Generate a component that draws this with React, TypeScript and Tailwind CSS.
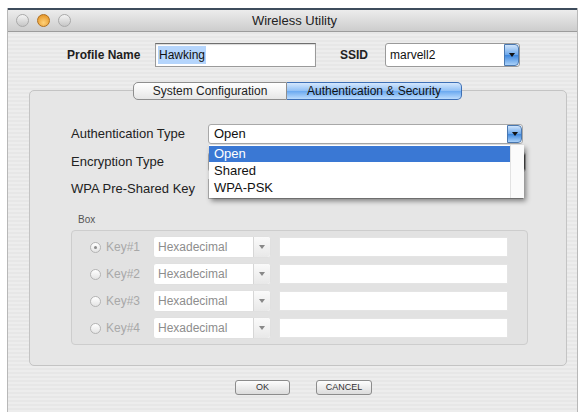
import { ChevronDown } from 'lucide-react';

const font = { fontFamily: '"Liberation Sans", Arial, sans-serif' };

const BlueArrow = ({ className = '' }: { className?: string }) => (
  <div
    className={`flex items-center justify-center w-[15px] h-full rounded-r-[4px] border border-[#4a78b0] bg-[linear-gradient(#cfe4fb,#6aa6ea_50%,#3d87de_51%,#a9d0f8)] ${className}`}
  >
    <div className="w-0 h-0 border-l-[3px] border-r-[3px] border-t-[4px] border-l-transparent border-r-transparent border-t-[#111]" />
  </div>
);

const GrayArrow = () => (
  <div className="flex items-center justify-center w-[17px] h-full rounded-r-[3px] border-l border-[#d6d6d6] bg-[linear-gradient(#fafafa,#e8e8e8)]">
    <div className="w-0 h-0 border-l-[3px] border-r-[3px] border-t-[4px] border-l-transparent border-r-transparent border-t-[#888]" />
  </div>
);

const KeyRow = ({ label, checked }: { label: string; checked?: boolean }) => (
  <div className="flex items-center h-[22px]">
    <div className="w-[11px] h-[11px] ml-[18px] rounded-full border border-[#b4b4b4] bg-[linear-gradient(#ffffff,#e4e4e4)] flex items-center justify-center">
      {checked && <div className="w-[3px] h-[3px] rounded-full bg-[#8a8a8a]" />}
    </div>
    <span className="ml-[5px] w-[47px] text-[12px] text-[#a8a8a8]">{label}</span>
    <div className="flex w-[118px] h-[22px] border border-[#e0e0e0] bg-white rounded-[3px]">
      <span className="flex-1 pl-[4px] text-[12px] leading-[20px] text-[#8d8d8d]">Hexadecimal</span>
      <GrayArrow />
    </div>
    <div className="ml-[8px] w-[229px] h-[20px] bg-white border border-[#e4e4e4]" />
  </div>
);

export default function App() {
  return (
    <div className="w-[582px] h-[412px] overflow-hidden bg-white pl-[7px] pt-[8px]" style={font}>
      <div className="w-[571px] h-[420px] border-x border-[#b8b8b8] flex flex-col bg-[repeating-linear-gradient(0deg,#ededed_0px,#ededed_2px,#e7e7e7_2px,#e7e7e7_4px)]">
        {/* title bar */}
        <div className="relative h-[24px] border-t-2 border-[#3e4c5c] border-b border-b-[#9c9c9c] bg-[linear-gradient(#ececec,#cdcdcd)] flex items-center justify-center">
          <div className="absolute left-[8px] top-[4px] flex gap-[8px]">
            <div className="w-[13px] h-[13px] rounded-full border border-[#a9a9a9] bg-[linear-gradient(#f4f4f4,#c6c6c6)]" />
            <div className="w-[13px] h-[13px] rounded-full border border-[#b07020] bg-[radial-gradient(circle_at_50%_70%,#ffd27a,#e08a18)]" />
            <div className="w-[13px] h-[13px] rounded-full border border-[#a9a9a9] bg-[linear-gradient(#f4f4f4,#c6c6c6)]" />
          </div>
          <span className="text-[13px] text-[#222] ml-[4px]">Wireless Utility</span>
        </div>

        {/* profile row */}
        <div className="flex items-center mt-[11px] h-[24px] pl-[59px]">
          <span className="w-[88px] text-[12px] font-bold text-[#1e1e1e]">Profile Name</span>
          <div className="w-[161px] h-[24px] bg-white border border-[#9a9a9a] border-t-[#6f6f6f] flex items-center pl-[2px] shadow-[inset_0_1px_1px_rgba(0,0,0,0.15)]">
            <span className="bg-[#b5d5fc] px-[1px] text-[12px] text-[#111]">Hawking</span>
          </div>
          <span className="ml-[24px] w-[45px] text-[12px] font-bold text-[#222]">SSID</span>
          <div className="flex w-[135px] h-[24px] bg-white border border-[#9a9a9a] rounded-[3px]">
            <span className="flex-1 pl-[4px] text-[12px] leading-[22px] text-[#111]">marvell2</span>
            <BlueArrow />
          </div>
        </div>

        {/* tabs */}
        <div className="flex mt-[15px] ml-[125px] h-[18px] relative z-10">
          <div className="w-[154px] h-[18px] rounded-l-[5px] border border-[#8e8e8e] bg-[linear-gradient(#ffffff,#e6e6e6)] flex items-center justify-center text-[12px] text-[#222]">
            System Configuration
          </div>
          <div className="w-[175px] h-[18px] rounded-r-[5px] border border-l-0 border-[#3d6fb5] bg-[linear-gradient(#d4e7fd,#8fbff5_50%,#6aa9f0_51%,#bcdcfd)] flex items-center justify-center text-[12px] text-[#111]">
            Authentication &amp; Security
          </div>
        </div>

        {/* tab panel */}
        <div className="ml-[21px] -mt-[10px] w-[538px] h-[276px] rounded-[5px] border border-[#c4c4c4] bg-[#e6e6e6] flex flex-col pl-[41px]">
          <div className="flex items-center mt-[33px] h-[20px]">
            <span className="w-[137px] text-[13px] text-[#222]">Authentication Type</span>
            <div className="relative flex w-[315px] h-[20px] bg-white border border-[#a8a8a8] rounded-[3px]">
              <span className="flex-1 pl-[5px] text-[13px] leading-[18px] text-[#111]">Open</span>
              <BlueArrow />
              {/* open list */}
              <div className="absolute left-0 top-[20px] w-[315px] h-[53px] bg-white shadow-[2px_3px_5px_rgba(0,0,0,0.45)] z-20 flex">
                <div className="flex-1 flex flex-col pt-[1px]">
                  <div className="h-[16px] bg-[#3a78d4] pl-[5px] text-[13px] leading-[16px] text-white">Open</div>
                  <div className="h-[17px] pl-[5px] text-[13px] leading-[17px] text-[#111]">Shared</div>
                  <div className="h-[17px] pl-[5px] text-[13px] leading-[17px] text-[#111]">WPA-PSK</div>
                </div>
                <div className="w-[14px] border-l border-[#e2e2e2] bg-[#fbfbfb]" />
              </div>
            </div>
          </div>
          <div className="flex items-center mt-[8px] h-[20px]">
            <span className="w-[137px] text-[13px] text-[#222]">Encryption Type</span>
            <div className="flex w-[318px] h-[20px] bg-white border border-[#a8a8a8] rounded-[3px]">
              <span className="flex-1" />
              <div className="w-[6px] h-full bg-[#555] rounded-r-[3px]" />
            </div>
          </div>
          <div className="flex items-center mt-[7px] h-[20px]">
            <span className="w-[137px] text-[13px] text-[#222]">WPA Pre-Shared Key</span>
            <div className="w-[315px] h-[20px] bg-white border border-[#b0b0b0]" />
          </div>

          <span className="mt-[15px] ml-[7px] text-[10px] text-[#555] leading-[12px]">Box</span>
          <div className="mt-[4px] w-[457px] h-[115px] rounded-[4px] border border-[#cdcdcd] bg-[#e2e2e2] flex flex-col pt-[5px] gap-[5px]">
            <KeyRow label="Key#1" checked />
            <KeyRow label="Key#2" />
            <KeyRow label="Key#3" />
            <KeyRow label="Key#4" />
          </div>
        </div>

        {/* buttons */}
        <div className="flex mt-[14px] ml-[227px] gap-[26px]">
          <button className="w-[55px] h-[15px] rounded-[3px] border border-[#8c8c8c] bg-[linear-gradient(#fdfdfd,#dcdcdc)] text-[9px] leading-[13px] text-[#333]">
            OK
          </button>
          <button className="w-[56px] h-[15px] rounded-[3px] border border-[#8c8c8c] bg-[linear-gradient(#fdfdfd,#dcdcdc)] text-[9px] leading-[13px] text-[#333]">
            CANCEL
          </button>
        </div>
      </div>
      <ChevronDown className="hidden" />
    </div>
  );
}
